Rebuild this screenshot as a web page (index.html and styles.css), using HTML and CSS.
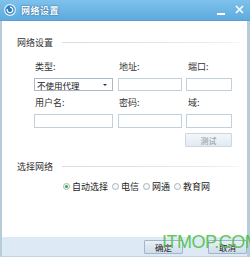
FILE: index.html
```html
<!DOCTYPE html>
<html>
<head>
<meta charset="utf-8">
<link rel="stylesheet" href="styles.css">
</head>
<body>
<div class="window">
  <div class="titlebar">
    <svg class="app-icon" width="12" height="12" viewBox="0 0 12 12">
      <circle cx="6" cy="6" r="5.3" fill="#2b7fc0" stroke="#e8f4fc" stroke-width="1.2"/>
      <path d="M6 3.2a2.8 2.8 0 1 1 -2.6 1.8" fill="none" stroke="#fff" stroke-width="1.3"/>
    </svg>
    <span class="title">网络设置</span>
    <span class="spacer"></span>
    <span class="min"></span>
    <svg class="close" width="9" height="9" viewBox="0 0 9 9">
      <path d="M1 1L8 8M8 1L1 8" stroke="#fff" stroke-width="1.6"/>
    </svg>
  </div>
  <div class="content">
    <div class="group-head"><span>网络设置</span><i class="rule"></i></div>
    <div class="fields">
      <div class="lbl">类型:</div>
      <div class="lbl">地址:</div>
      <div class="lbl">端口:</div>
      <div class="box select"><span>不使用代理</span><i class="arrow"></i></div>
      <div class="box"></div>
      <div class="box"></div>
      <div class="lbl">用户名:</div>
      <div class="lbl">密码:</div>
      <div class="lbl">域:</div>
      <div class="box tall"></div>
      <div class="box tall"></div>
      <div class="box tall"></div>
    </div>
    <div class="test-row"><button class="test">测试</button></div>
    <div class="group-head second"><span>选择网络</span><i class="rule"></i></div>
    <div class="radios">
      <label class="radio"><i class="dot on"></i>自动选择</label>
      <label class="radio"><i class="dot"></i>电信</label>
      <label class="radio"><i class="dot"></i>网通</label>
      <label class="radio"><i class="dot"></i>教育网</label>
    </div>
  </div>
  <div class="footer">
    <button class="btn">确定</button>
    <button class="btn">取消</button>
  </div>
  <div class="watermark">ITMOP.COM</div>
</div>
</body>
</html>
```

FILE: styles.css
```css
html, body {
  margin: 0;
  padding: 0;
  background: #ffffff;
}
body {
  width: 250px;
  height: 260px;
  overflow: hidden;
  font-family: "Noto Sans CJK SC", "Liberation Sans", sans-serif;
  font-size: 9px;
  color: #333;
}
.window {
  position: relative;
  width: 250px;
  height: 257px;
  box-sizing: border-box;
  border-left: 2px solid #b7cbd9;
  border-right: 3px solid #b7cbd9;
  border-bottom: 1px solid #c4d3de;
  display: flex;
  flex-direction: column;
  background: #fff;
}
.titlebar {
  height: 21px;
  margin: 0 -3px 0 -2px;
  background: linear-gradient(#7ec2ec, #5eaade);
  display: flex;
  align-items: center;
  padding: 0 6px 0 4px;
  box-sizing: border-box;
  border-bottom: 1px solid #5b9fcf;
}
.app-icon { display: block; margin-right: 5px; }
.title {
  color: #fff;
  font-weight: bold;
  font-size: 9px;
  text-shadow: 0 0 2px #2a6a9a, 0 0 1px #2a6a9a;
  letter-spacing: 0.5px;
}
.spacer { flex: 1; }
.min {
  width: 8px;
  height: 2px;
  background: #fff;
  margin-top: 8px;
  margin-right: 10px;
}
.close { display: block; margin-top: -2px; }
.content {
  flex: 1;
  padding: 15px 8px 0 15px;
  display: flex;
  flex-direction: column;
}
.group-head {
  height: 12px;
  display: flex;
  align-items: center;
  color: #333;
}
.group-head span { margin-right: 9px; }
.group-head .rule {
  flex: 1;
  height: 1px;
  background: linear-gradient(90deg, #d5dee6, #e4eaef 80%, #f4f6f8);
}
.fields {
  margin: 7px 0 0 17px;
  display: grid;
  grid-template-columns: 79px 64px 45px;
  grid-template-rows: 23px 13px 23px 14px;
  column-gap: 5px;
}
.fields .box:nth-child(6),
.fields .box:nth-child(12) { margin-left: -1px; }
.lbl {
  display: flex;
  align-items: center;
  padding-left: 1px;
  color: #333;
}
.box {
  border: 1px solid #c2d0dc;
  background: #fff;
  box-sizing: border-box;
}
.select {
  border-color: #a9b9c8;
  display: flex;
  align-items: center;
  padding-left: 2px;
  color: #111;
  font-size: 8.5px;
}
.select span { flex: 1; }
.arrow {
  width: 0;
  height: 0;
  border-left: 2px solid transparent;
  border-right: 2px solid transparent;
  border-top: 2px solid #333;
  margin-right: 5px;
}
.test-row {
  display: flex;
  justify-content: flex-end;
  margin-top: 5px;
  padding-right: 7px;
}
.test {
  width: 47px;
  height: 14px;
  padding: 0;
  border: 1px solid #cbd7e2;
  border-radius: 1px;
  background: linear-gradient(#f3f7fa, #e2eaf1);
  font-family: inherit;
  font-size: 8px;
  color: #8a96a0;
}
.second { margin-top: 13px; }
.radios {
  margin: 8px 0 0 46px;
  height: 12px;
  display: flex;
  align-items: center;
  gap: 4px;
}
.radio {
  display: flex;
  align-items: center;
  color: #222;
}
.dot {
  width: 7px;
  height: 7px;
  border-radius: 50%;
  border: 1px solid #a8b4bf;
  background: #f6f8fa;
  box-sizing: border-box;
  margin-right: 2px;
  display: flex;
  align-items: center;
  justify-content: center;
}
.dot.on::after {
  content: "";
  width: 3px;
  height: 3px;
  border-radius: 50%;
  background: #3aa33a;
}
.footer {
  height: 19px;
  background: #dde9f5;
  display: flex;
  justify-content: flex-end;
  align-items: center;
  gap: 25px;
  padding-right: 0px;
  margin-top: auto;
}
.btn {
  width: 39px;
  height: 14px;
  padding: 0;
  border: 1px solid #9fb6cc;
  border-radius: 1px;
  background: linear-gradient(#e9f0f7, #cfdcea);
  font-family: inherit;
  font-size: 8.5px;
  color: #222;
}
.watermark {
  position: absolute;
  left: 160px;
  top: 232px;
  font-family: "Liberation Sans", sans-serif;
  font-size: 18px;
  color: rgba(70, 190, 60, 0.85);
  letter-spacing: -0.5px;
}
```
